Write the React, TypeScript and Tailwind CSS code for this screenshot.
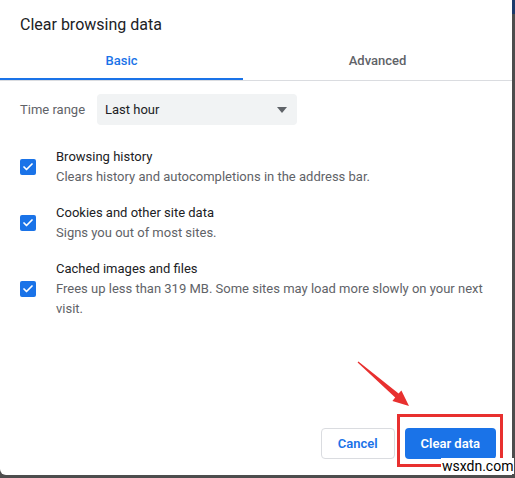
import { Check } from 'lucide-react';

const items = [
  {
    title: 'Browsing history',
    desc: 'Clears history and autocompletions in the address bar.',
  },
  {
    title: 'Cookies and other site data',
    desc: 'Signs you out of most sites.',
  },
  {
    title: 'Cached images and files',
    desc: 'Frees up less than 319 MB. Some sites may load more slowly on your next visit.',
  },
];

export default function App() {
  return (
    <div
      className="relative w-[515px] h-[478px] bg-[#4d4d4d] overflow-hidden"
      style={{ fontFamily: 'Roboto, "Liberation Sans", sans-serif' }}
    >
      {/* top-right strip of the page behind */}
      <div className="absolute right-0 top-0 w-[3px] h-[14px] bg-[#1d3a6b]" />

      {/* Dialog */}
      <div className="w-[512px] h-[475px] bg-white rounded-bl-[6px] flex flex-col">
        {/* Title */}
        <div className="h-[47px] pl-5 pt-[15px] text-[16px] leading-[20px] text-[#202124]">
          Clear browsing data
        </div>

        {/* Tabs */}
        <div className="flex h-[34px] border-b border-[#dadce0]">
          <div className="relative w-[243px] pt-[4px] text-center text-[13px] leading-[20px] font-medium text-[#1a73e8]">
            Basic
            <div className="absolute left-0 right-0 bottom-0 h-[2px] bg-[#1a73e8]" />
          </div>
          <div className="flex-1 pt-[4px] text-center text-[13px] leading-[20px] font-medium text-[#5f6368]">
            Advanced
          </div>
        </div>

        {/* Time range */}
        <div className="flex items-center mt-[13px] pl-5">
          <span className="w-[77px] text-[13px] text-[#5f6368]">Time range</span>
          <div className="w-[200px] h-[31px] bg-[#f1f3f4] rounded-[4px] flex items-center justify-between pl-2 pr-[9px]">
            <span className="text-[13px] text-[#202124]">Last hour</span>
            <svg width="12" height="6" viewBox="0 0 12 6">
              <path d="M1 0h10L6 6z" fill="#5f6368" />
            </svg>
          </div>
        </div>

        {/* Checkbox items */}
        <div className="flex flex-col gap-[16px] mt-[22px]">
          {items.map((item) => (
            <div key={item.title} className="flex items-center pl-5">
              <div className="w-4 h-4 rounded-[2px] bg-[#1a73e8] flex items-center justify-center shrink-0">
                <Check className="w-3 h-3 text-white" strokeWidth={3.5} />
              </div>
              <div className="ml-5 w-[436px] text-[13px] leading-[20px]">
                <div className="text-[#202124]">{item.title}</div>
                <div className="text-[#5f6368]">{item.desc}</div>
              </div>
            </div>
          ))}
        </div>

        {/* Buttons */}
        <div className="mt-auto mb-[16px] flex justify-end gap-[10px] pr-[16px]">
          <button className="h-[31px] px-4 border border-[#dadce0] rounded-[4px] bg-white text-[13px] font-semibold text-[#1a73e8]">
            Cancel
          </button>
          <button className="h-[31px] px-4 rounded-[4px] bg-[#1a73e8] text-[13px] font-semibold text-white">
            Clear data
          </button>
        </div>
      </div>

      {/* Annotation: red arrow */}
      <svg className="absolute left-0 top-0" width="515" height="478" viewBox="0 0 515 478">
        <polygon
          points="357.6,362.6 395.2,397.6 392.4,401 409,406 401.4,390.4 398.6,393.6 358.4,361.4"
          fill="#e8302f"
        />
      </svg>

      {/* Annotation: red box */}
      <div className="absolute left-[397px] top-[414px] w-[106px] h-[53px] border-[3px] border-[#e8302f]" />

      {/* Watermark */}
      <div className="absolute left-[441px] top-[458px] text-[14px] leading-[16px] text-black bg-white px-[1px]">
        wsxdn.com
      </div>
    </div>
  );
}
